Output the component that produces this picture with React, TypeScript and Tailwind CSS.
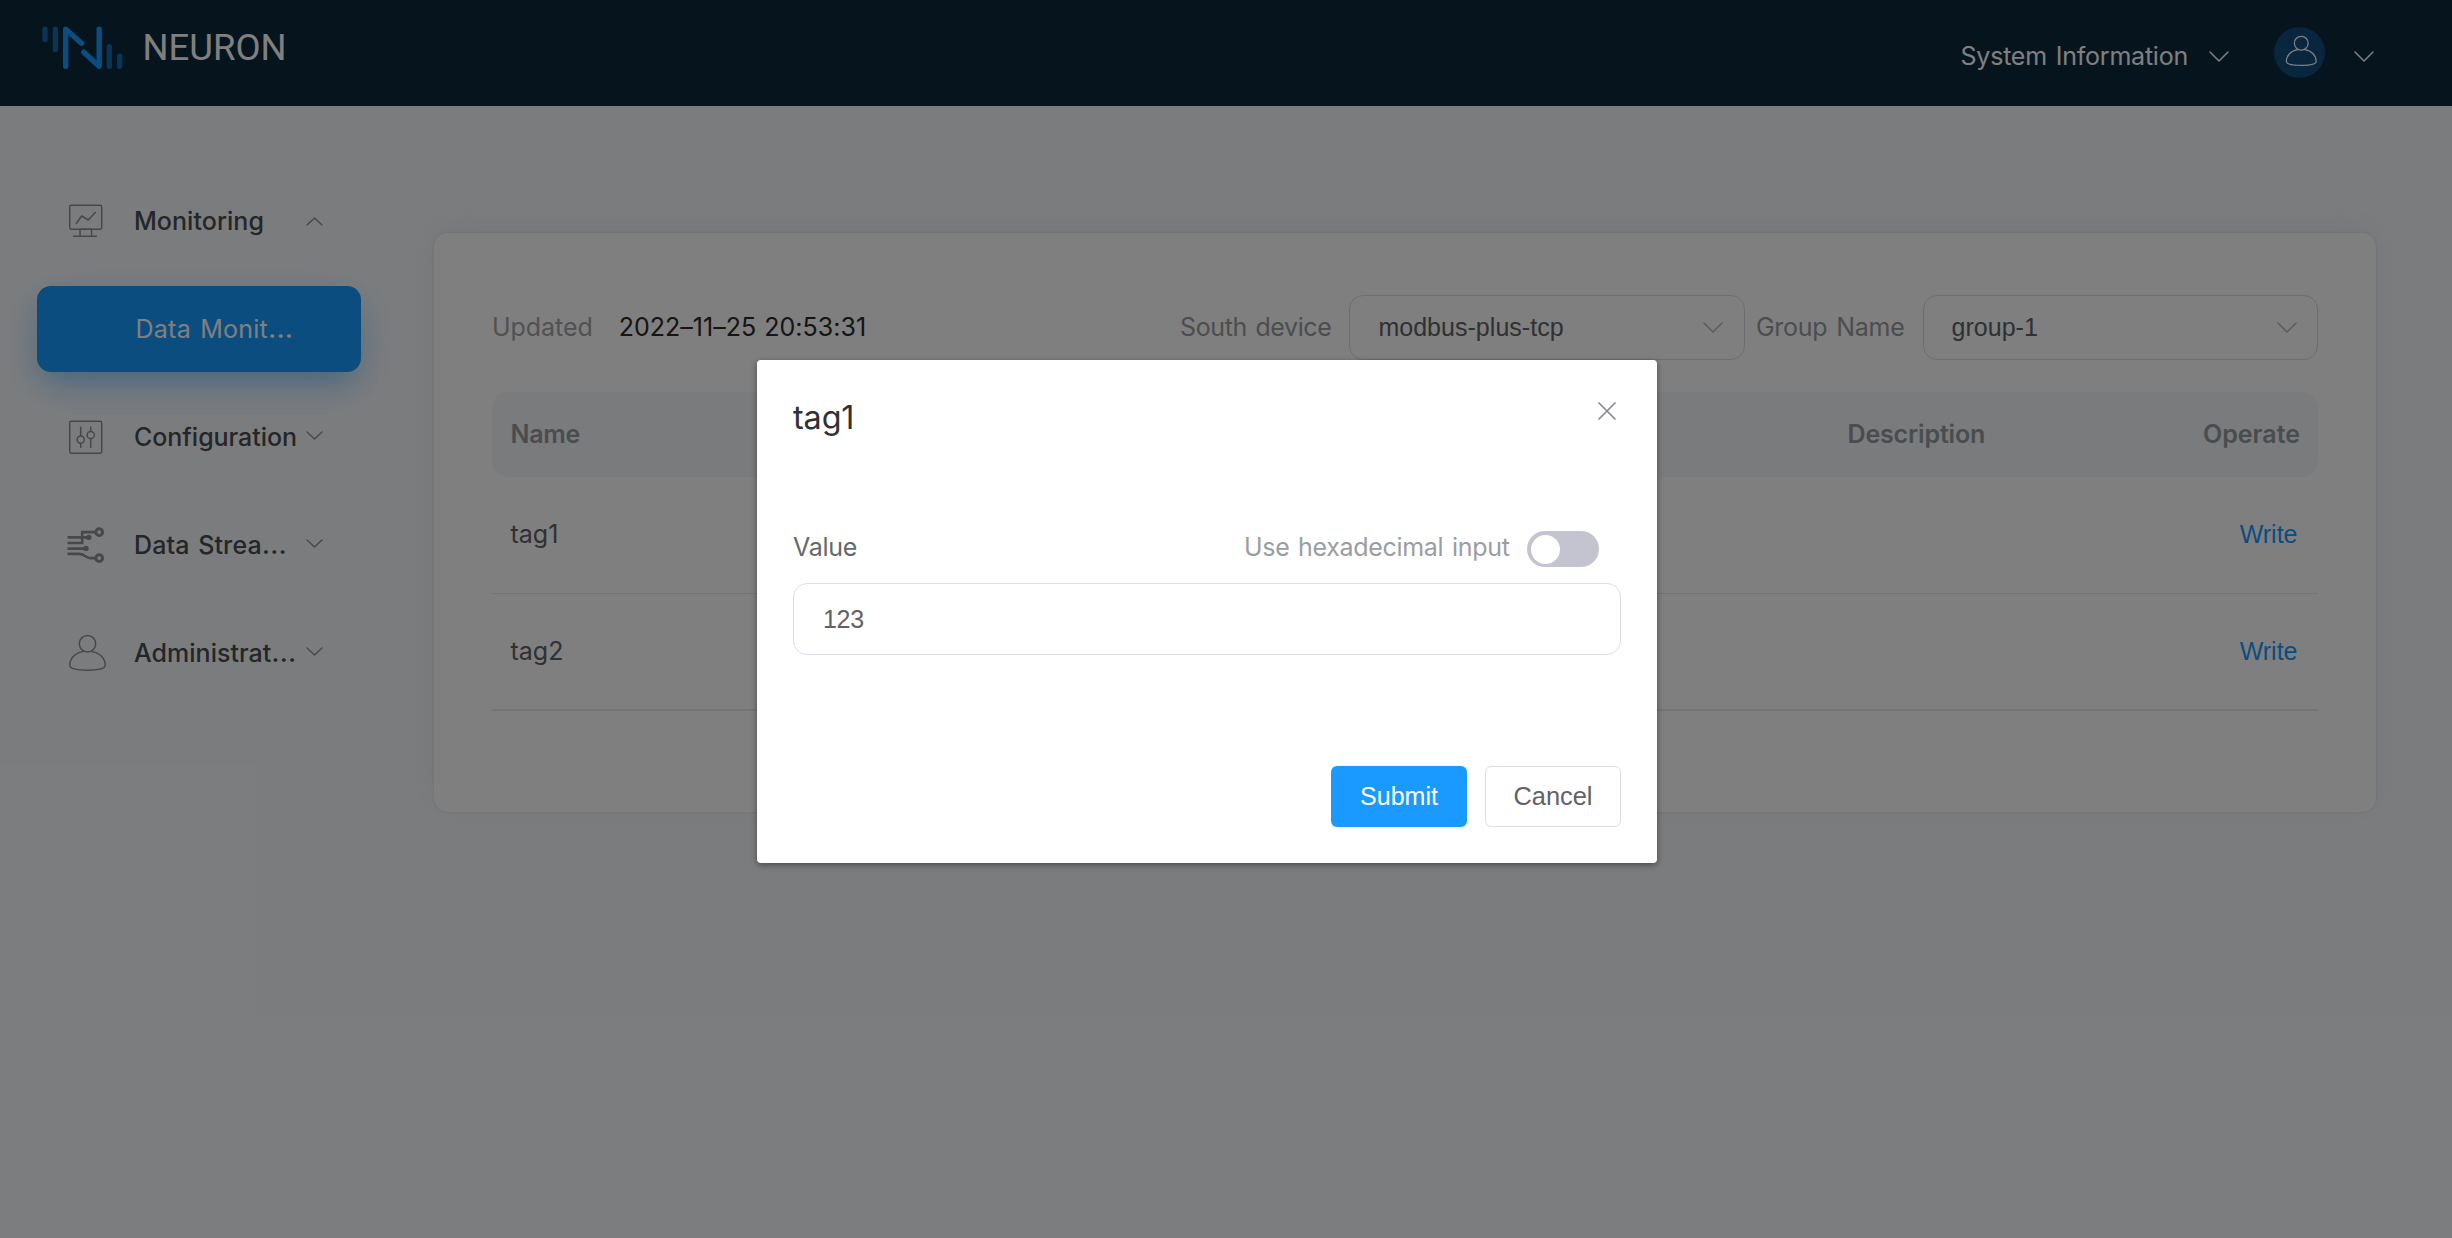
import type { ReactNode } from 'react';

function Chevron({ w, h, up = false, className = '' }: { w: number; h: number; up?: boolean; className?: string }) {
  const d = up ? `M1 ${h - 1}L${w / 2} 1L${w - 1} ${h - 1}` : `M1 1L${w / 2} ${h - 1}L${w - 1} 1`;
  return (
    <svg width={w} height={h} viewBox={`0 0 ${w} ${h}`} fill="none" stroke="currentColor" strokeWidth="1.5" strokeLinecap="round" strokeLinejoin="round" className={`shrink-0 ${className}`}>
      <path d={d} />
    </svg>
  );
}

function Logo() {
  return (
    <svg width="82" height="44" viewBox="0 0 82 44" fill="none" strokeLinecap="round" strokeLinejoin="round">
      <g stroke="#126ab0" strokeWidth="5.3">
        <path d="M3 3.2V13.5M13.4 3.2V23.5M67.3 20.7V40.3M77.7 30.2V40.3" />
      </g>
      <g stroke="#189aff" strokeWidth="5.4">
        <path d="M23.7 40.3V3.2L39.6 17.2M41.8 26.2L57.2 40.3V3.2" />
      </g>
    </svg>
  );
}

function MonitorIcon() {
  return (
    <svg width="38" height="38" viewBox="0 0 38 38" fill="none" stroke="currentColor" strokeWidth="1.5" strokeLinejoin="round">
      <rect x="2.7" y="3.2" width="32" height="24" rx="1.6" />
      <path d="M9 22L14.6 14L21.3 18L28.7 10M13 27.2H24.6V34.3H13ZM6 34.3H30" />
    </svg>
  );
}

function SlidersIcon() {
  return (
    <svg width="38" height="38" viewBox="0 0 38 38" fill="none" stroke="currentColor" strokeWidth="1.5">
      <rect x="2.7" y="3.2" width="32" height="32" rx="1.6" />
      <circle cx="13.7" cy="21.6" r="3.6" />
      <circle cx="23.7" cy="17" r="3.6" />
      <path d="M13.7 8.6V18M13.7 25.2V30M23.7 8.6V13.4M23.7 20.6V30" />
    </svg>
  );
}

function StreamIcon() {
  return (
    <svg width="38" height="38" viewBox="0 0 38 38" fill="none" stroke="currentColor" strokeWidth="2.6">
      <circle cx="32.2" cy="6.1" r="3.4" strokeWidth="3" />
      <circle cx="32.2" cy="32.1" r="3.4" strokeWidth="3" />
      <path d="M0.5 11.4H20M0.5 17H15.2V6.1H28.5M0.5 22.6H17M0.5 27.9H12.5C17 28 19 32.1 23.5 32.1H28.5" />
      <circle cx="21.8" cy="11.4" r="2.7" fill="currentColor" stroke="none" />
      <circle cx="19" cy="22.4" r="2.7" fill="currentColor" stroke="none" />
    </svg>
  );
}

function UserIcon({ className = '' }: { className?: string }) {
  return (
    <svg viewBox="0 0 38 38" fill="none" stroke="currentColor" strokeWidth="1.5" className={className}>
      <circle cx="20.5" cy="9.7" r="8.2" />
      <path d="M16.6 17.4C8 18.5 2.8 24.5 2.8 31.3C2.8 34.6 10 36.2 20.6 36.2C31 36.2 38.2 34.6 38.2 31.3C38.2 24.5 33 18.5 24.4 17.4" />
    </svg>
  );
}

function Label({ text, cut = false }: { text: string; cut?: boolean }) {
  return (
    <>
      {text}
      {cut && <span className="text-[29px] font-normal">…</span>}
    </>
  );
}

function MenuItem({ icon, text, cut, up, spacing }: { icon: ReactNode; text: string; cut?: boolean; up?: boolean; spacing: string }) {
  return (
    <div className="flex h-[86px] items-center pl-[30px] text-[#4a4c4f]">
      <span className="flex w-[67px] shrink-0 text-[#8e9093]">{icon}</span>
      <span className={`w-[171.5px] shrink-0 whitespace-nowrap font-medium leading-[30px] ${spacing}`}>
        <Label text={text} cut={cut} />
      </span>
      <Chevron w={17} h={9} up={up} className={up ? 'text-[#909399]' : '-mt-1 text-[#909399]'} />
    </div>
  );
}

function Select({ value }: { value: string }) {
  return (
    <div className="flex h-[65px] w-[395.5px] items-center justify-between rounded-[14px] border border-[#dcdde3] pb-px pl-7 pr-[20.5px] font-['Liberation_Sans',sans-serif] text-[#606266]">
      <span className="tracking-[0.03px]">{value}</span>
      <Chevron w={20} h={11} className="text-[#b4b7be]" />
    </div>
  );
}

function Row({ name, last = false }: { name: string; last?: boolean }) {
  return (
    <div className={`flex h-[117px] items-center justify-between pb-0.5 pl-[18.5px] pr-[20.5px] text-[#606266] ${last ? 'border-b-2 border-[#e9e9f2]' : 'border-b border-[#e6e8ed]'}`}>
      <span>{name}</span>
      <a className="font-['Liberation_Sans',sans-serif] text-[#189aff]">Write</a>
    </div>
  );
}

export default function App() {
  return (
    <div className="relative h-[1238px] w-full overflow-hidden bg-[#f7f9fc] font-['Inter',sans-serif] text-[25px] leading-[30px]">
      <header className="flex h-[106px] items-start justify-between bg-[#0c283c] pl-[42px] pr-[78px] text-white">
        <div className="flex items-center pt-[25.5px]">
          <Logo />
          <span className="ml-[18.5px] font-['Roboto',sans-serif] text-[36.5px] leading-[44px]">NEURON</span>
        </div>
        <div className="flex items-center pt-[27px]">
          <span className="pt-[7px] tracking-[-0.22px] [word-spacing:2px]">System Information</span>
          <Chevron w={20} h={11} className="ml-[21px] mt-[8px]" />
          <div className="ml-[45px] flex size-[51px] items-center justify-center rounded-full bg-[#104c7a]">
            <UserIcon className="mb-[3px] size-[32px] overflow-visible" />
          </div>
          <Chevron w={20} h={11} className="ml-[29px] mt-[8px]" />
        </div>
      </header>

      <div className="flex">
        <nav className="ml-[37px] flex w-[324px] shrink-0 flex-col gap-[22px] pt-[72px]">
          <MenuItem icon={<MonitorIcon />} text="Monitoring" up spacing="tracking-[0.05px]" />
          <div className="flex h-[86px] items-center rounded-[14px] bg-[#189aff] pl-[98.5px] text-white shadow-[0_16px_30px_-6px_rgba(24,154,255,0.4),0_8px_48px_rgba(24,154,255,0.12)]">
            <span className="-mt-0.5 whitespace-nowrap leading-[30px] tracking-[0.25px] [word-spacing:2px]"><Label text="Data Monit" cut /></span>
          </div>
          <MenuItem icon={<SlidersIcon />} text="Configuration" spacing="tracking-[-0.04px]" />
          <MenuItem icon={<StreamIcon />} text="Data Strea" cut spacing="-mt-0.5 tracking-[0.1px] [word-spacing:2px]" />
          <MenuItem icon={<UserIcon className="size-[38px] overflow-visible" />} text="Administrat" cut spacing="-mt-0.5 tracking-[0.02px]" />
        </nav>

        <main className="ml-[73px] mt-[127px] h-[579px] w-[1942px] rounded-[14px] bg-white px-[58px] pt-[62px] shadow-[0_-6px_30px_rgba(140,165,190,0.14),0_0_2px_rgba(140,150,170,0.3)]">
          <div className="flex items-center justify-between">
            <div className="flex items-center pb-px">
              <span className="tracking-[-0.05px] text-[#a1a3a6]">Updated</span>
              <span className="ml-[26px] tracking-[0.02px] text-[#2a2a2a] [word-spacing:1px]">2022–11–25 20:53:31</span>
            </div>
            <div className="flex items-center text-[#989a9e]">
              <span className="mr-[18px] pb-px tracking-[-0.4px] [word-spacing:2px]">South device</span>
              <Select value="modbus-plus-tcp" />
              <span className="ml-[11px] mr-[18px] pb-px tracking-[-0.25px] [word-spacing:2px]">Group Name</span>
              <Select value="group-1" />
            </div>
          </div>

          <div className="mt-8 flex h-[85px] items-center rounded-2xl bg-[#f4f6fa] pb-px pl-[18.5px] pr-[18px] font-semibold text-[#95989d]">
            <span className="w-[1337px] tracking-[-0.3px]">Name</span>
            <span className="flex-1 tracking-[-0.15px]">Description</span>
            <span>Operate</span>
          </div>
          <Row name="tag1" />
          <Row name="tag2" last />
        </main>
      </div>

      <div className="absolute inset-0 flex items-start justify-center bg-black/50 pr-[38px] pt-[360px]">
        <section className="flex h-[503px] w-[900px] flex-col rounded bg-white px-9 shadow-[0_2px_6px_rgba(0,0,0,0.4)]">
          <div className="flex h-[77px] items-start justify-between">
            <h2 className="pt-[38px] text-[32.3px] leading-[40px] tracking-[-0.1px] text-[#303133]">tag1</h2>
            <svg width="18" height="18" viewBox="0 0 18 18" fill="none" stroke="#85888e" strokeWidth="1.7" strokeLinecap="round" className="mr-[5.5px] mt-[42px]">
              <path d="M1 1L17 17M17 1L1 17" />
            </svg>
          </div>
          <div className="mt-[94px] flex h-9 items-center justify-between pr-[22px]">
            <span className="-mt-1 tracking-[-0.25px] text-[#66686c]">Value</span>
            <div className="flex items-center">
              <span className="-mt-1 mr-[17.5px] tracking-[-0.32px] text-[#9a9da2] [word-spacing:2px]">Use hexadecimal input</span>
              <span className="flex h-9 w-[72px] items-center rounded-full bg-[#c4c4d0] pl-1">
                <span className="size-[29px] rounded-full bg-white" />
              </span>
            </div>
          </div>
          <div className="mt-4 flex h-[72px] items-center rounded-[14px] border border-[#dddde6] pl-[29px] font-['Liberation_Sans',sans-serif] tracking-[-0.3px] text-[#606266]">123</div>
          <div className="mt-[111px] flex justify-end gap-[18px] font-['Liberation_Sans',sans-serif]">
            <button className="h-[61px] w-[136px] rounded-md bg-[#1a9aff] pb-px text-white">Submit</button>
            <button className="h-[61px] w-[136px] rounded-md border border-[#dddde6] pb-px text-[25.4px] text-[#606266]">Cancel</button>
          </div>
        </section>
      </div>
    </div>
  );
}
